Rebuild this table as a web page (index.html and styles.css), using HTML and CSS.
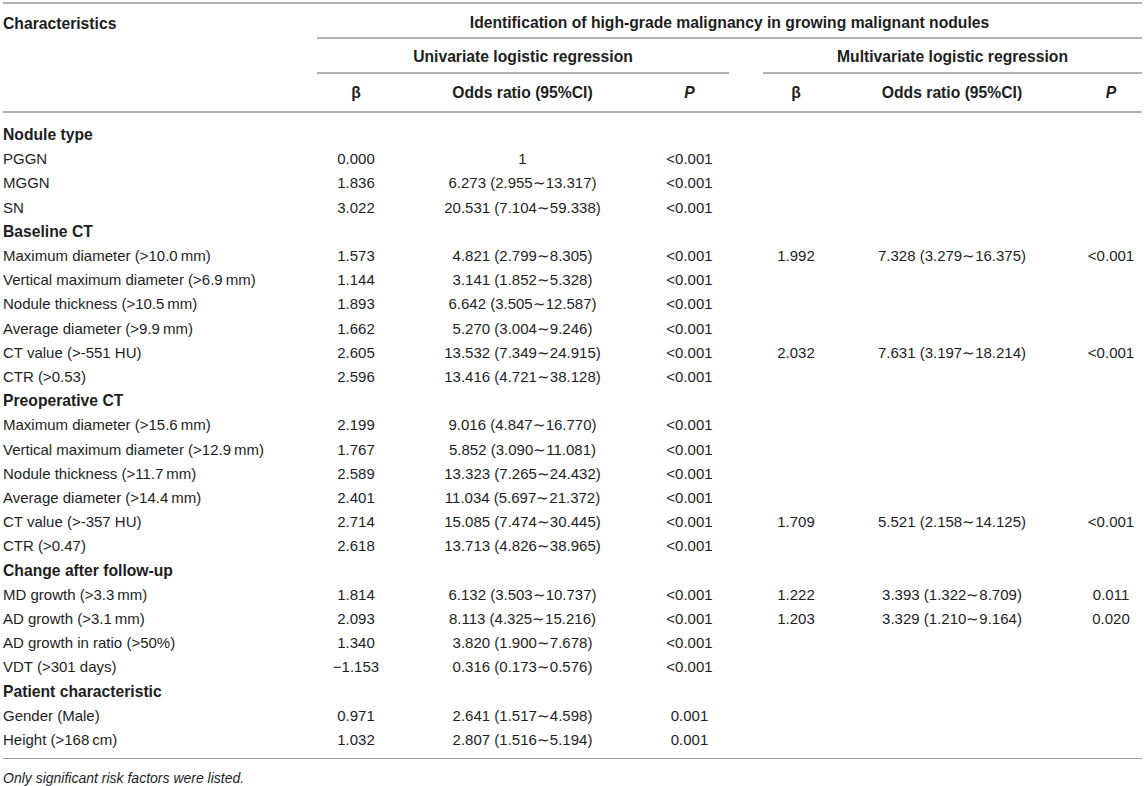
FILE: index.html
```html
<!DOCTYPE html>
<html lang="en">
<head>
    <meta charset="UTF-8">
    <title>High-grade malignancy in growing malignant nodules</title>
    <link rel="stylesheet" href="styles.css">
</head>
<body>

<table class="results">
    <colgroup>
        <col class="c-name">
        <col class="c-beta">
        <col class="c-or">
        <col class="c-p">
        <col class="c-gap">
        <col class="c-mbeta">
        <col class="c-mor">
        <col class="c-mp">
    </colgroup>
    <thead>
        <tr class="h1">
            <th class="name">Characteristics</th>
            <th colspan="7" class="group">Identification of high-grade malignancy in growing malignant nodules</th>
        </tr>
        <tr class="h2">
            <th></th>
            <th colspan="3" class="group">Univariate logistic regression</th>
            <th></th>
            <th colspan="3" class="group">Multivariate logistic regression</th>
        </tr>
        <tr class="h3">
            <th></th>
            <th>β</th>
            <th>Odds ratio (95%CI)</th>
            <th><i>P</i></th>
            <th></th>
            <th>β</th>
            <th>Odds ratio (95%CI)</th>
            <th class="last"><i>P</i></th>
        </tr>
    </thead>
    <tbody>
        <tr class="section first"><td colspan="8">Nodule type</td></tr>
        <tr><td>PGGN</td><td>0.000</td><td>1</td><td>&lt;0.001</td><td></td><td></td><td></td><td></td></tr>
        <tr><td>MGGN</td><td>1.836</td><td>6.273 (2.955∼13.317)</td><td>&lt;0.001</td><td></td><td></td><td></td><td></td></tr>
        <tr><td>SN</td><td>3.022</td><td>20.531 (7.104∼59.338)</td><td>&lt;0.001</td><td></td><td></td><td></td><td></td></tr>

        <tr class="section"><td colspan="8">Baseline CT</td></tr>
        <tr><td>Maximum diameter (&gt;10.0&#8201;mm)</td><td>1.573</td><td>4.821 (2.799∼8.305)</td><td>&lt;0.001</td><td></td><td>1.992</td><td>7.328 (3.279∼16.375)</td><td class="last">&lt;0.001</td></tr>
        <tr><td>Vertical maximum diameter (&gt;6.9&#8201;mm)</td><td>1.144</td><td>3.141 (1.852∼5.328)</td><td>&lt;0.001</td><td></td><td></td><td></td><td></td></tr>
        <tr><td>Nodule thickness (&gt;10.5&#8201;mm)</td><td>1.893</td><td>6.642 (3.505∼12.587)</td><td>&lt;0.001</td><td></td><td></td><td></td><td></td></tr>
        <tr><td>Average diameter (&gt;9.9&#8201;mm)</td><td>1.662</td><td>5.270 (3.004∼9.246)</td><td>&lt;0.001</td><td></td><td></td><td></td><td></td></tr>
        <tr><td>CT value (&gt;-551 HU)</td><td>2.605</td><td>13.532 (7.349∼24.915)</td><td>&lt;0.001</td><td></td><td>2.032</td><td>7.631 (3.197∼18.214)</td><td class="last">&lt;0.001</td></tr>
        <tr><td>CTR (&gt;0.53)</td><td>2.596</td><td>13.416 (4.721∼38.128)</td><td>&lt;0.001</td><td></td><td></td><td></td><td></td></tr>

        <tr class="section"><td colspan="8">Preoperative CT</td></tr>
        <tr><td>Maximum diameter (&gt;15.6&#8201;mm)</td><td>2.199</td><td>9.016 (4.847∼16.770)</td><td>&lt;0.001</td><td></td><td></td><td></td><td></td></tr>
        <tr><td>Vertical maximum diameter (&gt;12.9&#8201;mm)</td><td>1.767</td><td>5.852 (3.090∼11.081)</td><td>&lt;0.001</td><td></td><td></td><td></td><td></td></tr>
        <tr><td>Nodule thickness (&gt;11.7&#8201;mm)</td><td>2.589</td><td>13.323 (7.265∼24.432)</td><td>&lt;0.001</td><td></td><td></td><td></td><td></td></tr>
        <tr><td>Average diameter (&gt;14.4&#8201;mm)</td><td>2.401</td><td>11.034 (5.697∼21.372)</td><td>&lt;0.001</td><td></td><td></td><td></td><td></td></tr>
        <tr><td>CT value (&gt;-357 HU)</td><td>2.714</td><td>15.085 (7.474∼30.445)</td><td>&lt;0.001</td><td></td><td>1.709</td><td>5.521 (2.158∼14.125)</td><td class="last">&lt;0.001</td></tr>
        <tr><td>CTR (&gt;0.47)</td><td>2.618</td><td>13.713 (4.826∼38.965)</td><td>&lt;0.001</td><td></td><td></td><td></td><td></td></tr>

        <tr class="section"><td colspan="8">Change after follow-up</td></tr>
        <tr><td>MD growth (&gt;3.3&#8201;mm)</td><td>1.814</td><td>6.132 (3.503∼10.737)</td><td>&lt;0.001</td><td></td><td>1.222</td><td>3.393 (1.322∼8.709)</td><td class="last">0.011</td></tr>
        <tr><td>AD growth (&gt;3.1&#8201;mm)</td><td>2.093</td><td>8.113 (4.325∼15.216)</td><td>&lt;0.001</td><td></td><td>1.203</td><td>3.329 (1.210∼9.164)</td><td class="last">0.020</td></tr>
        <tr><td>AD growth in ratio (&gt;50%)</td><td>1.340</td><td>3.820 (1.900∼7.678)</td><td>&lt;0.001</td><td></td><td></td><td></td><td></td></tr>
        <tr><td>VDT (&gt;301 days)</td><td>&minus;1.153</td><td>0.316 (0.173∼0.576)</td><td>&lt;0.001</td><td></td><td></td><td></td><td></td></tr>

        <tr class="section"><td colspan="8">Patient characteristic</td></tr>
        <tr><td>Gender (Male)</td><td>0.971</td><td>2.641 (1.517∼4.598)</td><td>0.001</td><td></td><td></td><td></td><td></td></tr>
        <tr class="final"><td>Height (&gt;168&#8201;cm)</td><td>1.032</td><td>2.807 (1.516∼5.194)</td><td>0.001</td><td></td><td></td><td></td><td></td></tr>
    </tbody>
</table>

<p class="note">Only significant risk factors were listed.</p>

</body>
</html>
```

FILE: styles.css
```css
body {
    font-family: "Liberation Sans", Arial, sans-serif;
    font-size: 15px;
    color: #1e1e1e;
    background-color: #fff;
    margin: 0;
    padding: 0;
}
.results {
    width: 1139px;
    margin: 2px 0 0 3px;
    border-collapse: separate;
    border-spacing: 0;
    border-top: 2px solid #b0b0b0;
    border-bottom: 1px solid #a0a0a0;
    table-layout: fixed;
}
.c-name { width: 314px; }
.c-beta { width: 78px; }
.c-or { width: 255px; }
.c-p { width: 79px; }
.c-gap { width: 34px; }
.c-mbeta { width: 66px; }
.c-mor { width: 246px; }
.c-mp { width: 67px; }

.results th {
    font-weight: bold;
    font-size: 15.7px;
    line-height: 20px;
    text-align: center;
    padding: 0;
    white-space: nowrap;
}
.results th.name {
    text-align: left;
}
.results th.group {
    border-bottom: 2px solid #b0b0b0;
}
.h1 th {
    padding: 9px 0 4px;
}
.h2 th {
    padding: 8px 0 5px;
}
.h3 th {
    padding: 9px 0 8px;
    border-bottom: 2px solid #b0b0b0;
}
.results .last {
    padding-left: 5px;
}

.results td {
    line-height: 24.2px;
    padding: 0;
    text-align: center;
    white-space: nowrap;
}
.results td:first-child {
    text-align: left;
}
.results tr.section td {
    font-weight: bold;
    font-size: 15.7px;
}
.results tr.first td {
    padding-top: 10px;
}
.results tr.final td {
    padding-bottom: 6px;
}

.note {
    font-style: italic;
    font-size: 14px;
    line-height: 20px;
    margin: 9px 0 0 3px;
}
```
